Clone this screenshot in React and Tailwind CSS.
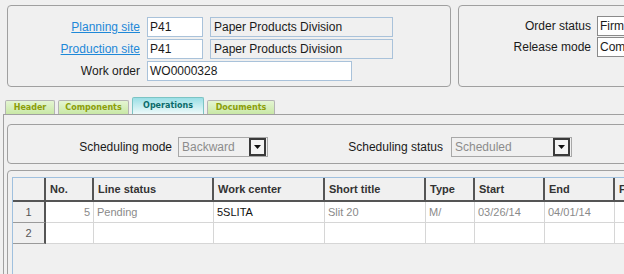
import React from 'react'

const cols = [
  { key: 'no', label: 'No.', w: 'w-[48px]' },
  { key: 'status', label: 'Line status', w: 'w-[120px]' },
  { key: 'wc', label: 'Work center', w: 'w-[111px]' },
  { key: 'title', label: 'Short title', w: 'w-[101px]' },
  { key: 'type', label: 'Type', w: 'w-[49px]' },
  { key: 'start', label: 'Start', w: 'w-[70px]' },
  { key: 'end', label: 'End', w: 'w-[70px]' },
  { key: 'f', label: 'F', w: 'w-[60px]' },
]

const rows = [
  { no: '5', status: 'Pending', wc: '5SLITA', title: 'Slit 20', type: 'M/', start: '03/26/14', end: '04/01/14', f: '' },
  { no: '', status: '', wc: '', title: '', type: '', start: '', end: '', f: '' },
]

function Combo({ value, w }) {
  return (
    <div className={`${w} h-[20px] flex items-center border border-[#a8a8a8] bg-[#f0f0f0] pr-[1px]`}>
      <span className="flex-1 pl-[3px] text-[12px] text-[#8c8c8c] leading-none">{value}</span>
      <div className="w-[17px] h-[18px] border-2 border-[#3a3a3a] bg-[#f4f4f4] flex items-center justify-center">
        <svg width="7" height="4" viewBox="0 0 7 4"><path d="M0 0h7L3.5 4z" fill="#111" /></svg>
      </div>
    </div>
  )
}

function Tab({ label, w, active }) {
  if (active) {
    return (
      <div className={`${w} h-[17px] border border-b-0 border-[#7cc4c4] rounded-t-[2px] bg-gradient-to-b from-[#9adfe6] to-[#eefafa] flex items-center justify-center text-[8px] font-bold text-[#0b6b6b] font-['DejaVu_Sans',sans-serif]`}>
        {label}
      </div>
    )
  }
  return (
    <div className={`${w} h-[14px] border border-b-0 border-[#b4b4b4] rounded-t-[2px] bg-gradient-to-b from-[#e4f5d2] to-[#c9e8a6] flex items-center justify-center text-[8px] font-bold text-[#8c9e08] font-['DejaVu_Sans',sans-serif]`}>
      {label}
    </div>
  )
}

export default function App() {
  return (
    <div className="w-[624px] h-[274px] overflow-hidden bg-[#f0f0f0] font-['Liberation_Sans',Arial,sans-serif] text-[12px] text-[#1a1a1a]">
      <div className="flex gap-[7px] pl-[7px] pt-[5px]">
        <div className="w-[444px] h-[82px] shrink-0 border border-[#a0a0a0] rounded-[4px] pt-[11px] flex flex-col gap-[2px]">
          <div className="flex items-center h-[20px]">
            <span className="w-[132px] text-right text-[#1e88d8] underline">Planning site</span>
            <div className="ml-[7px] w-[56px] h-[20px] border border-[#a9c2da] bg-white flex items-center pl-[2px]">P41</div>
            <div className="ml-[7px] w-[183px] h-[20px] border border-[#a9c2da] bg-[#f0f0f0] flex items-center pl-[3px]">Paper Products Division</div>
          </div>
          <div className="flex items-center h-[20px]">
            <span className="w-[132px] text-right text-[#1e88d8] underline">Production site</span>
            <div className="ml-[7px] w-[56px] h-[20px] border border-[#a9c2da] bg-white flex items-center pl-[2px]">P41</div>
            <div className="ml-[7px] w-[183px] h-[20px] border border-[#a9c2da] bg-[#f0f0f0] flex items-center pl-[3px]">Paper Products Division</div>
          </div>
          <div className="flex items-center h-[20px]">
            <span className="w-[132px] text-right">Work order</span>
            <div className="ml-[7px] w-[205px] h-[20px] border border-[#a9c2da] bg-white flex items-center pl-[2px]">WO0000328</div>
          </div>
        </div>
        <div className="w-[200px] h-[82px] shrink-0 border border-[#a0a0a0] rounded-[4px] pt-[10px] flex flex-col gap-[1px]">
          <div className="flex items-center h-[20px]">
            <span className="w-[132px] text-right">Order status</span>
            <div className="ml-[6px] w-[60px] h-[20px] border border-[#8a8a8a] bg-white flex items-center pl-[2px]">Firm</div>
          </div>
          <div className="flex items-center h-[20px]">
            <span className="w-[132px] text-right">Release mode</span>
            <div className="ml-[6px] w-[60px] h-[20px] border border-[#8a8a8a] bg-white flex items-center pl-[2px]">Complete</div>
          </div>
        </div>
      </div>

      <div className="mt-[10px] pl-[5px] flex items-end gap-[3px] h-[17px]">
        <Tab label="Header" w="w-[50px]" />
        <Tab label="Components" w="w-[71px]" />
        <Tab label="Operations" w="w-[72px]" active />
        <Tab label="Documents" w="w-[68px]" />
      </div>

      <div className="ml-[3px] border-l border-t border-[#a0a0a0] h-[200px] pl-[3px] pt-[9px]">
        <div className="w-[640px] h-[40px] border border-[#a0a0a0] rounded-[4px] flex items-start pt-[12px]">
          <span className="w-[164px] text-right text-[12px] leading-[20px]">Scheduling mode</span>
          <div className="ml-[6px]"><Combo value="Backward" w="w-[90px]" /></div>
          <span className="w-[175px] text-right text-[12px] leading-[20px]">Scheduling status</span>
          <div className="ml-[8px]"><Combo value="Scheduled" w="w-[121px]" /></div>
        </div>

        <div className="mt-[6px] w-[640px] h-[120px] border border-[#a0a0a0] rounded-[4px] pl-[4px] pt-[6px]">
          <div className="border-l border-t border-[#9fc0de] h-[120px] text-[11px]">
            <div className="flex h-[24px]">
              <div className="w-[33px] shrink-0 border-r-2 border-b-2 border-[#555]" />
              {cols.map((c) => (
                <div key={c.key} className={`${c.w} shrink-0 border-r-2 border-b-2 border-[#555] flex items-center pl-[4px] font-bold text-[#333]`}>
                  {c.label}
                </div>
              ))}
            </div>
            {rows.map((r, i) => (
              <div key={i} className="flex h-[21px]">
                <div className="w-[33px] shrink-0 border-r-2 border-b border-r-[#555] border-b-[#9a9a9a] flex items-center justify-center text-[#555]">{i + 1}</div>
                {cols.map((c) => (
                  <div key={c.key} className={`${c.w} shrink-0 border-r border-b border-[#d6d6d6] bg-white flex items-center px-[3px] ${c.key === 'no' ? 'justify-end' : ''} ${c.key === 'wc' ? 'text-[#111]' : 'text-[#8a8a8a]'}`}>
                    {r[c.key]}
                  </div>
                ))}
              </div>
            ))}
          </div>
        </div>
      </div>
    </div>
  )
}
